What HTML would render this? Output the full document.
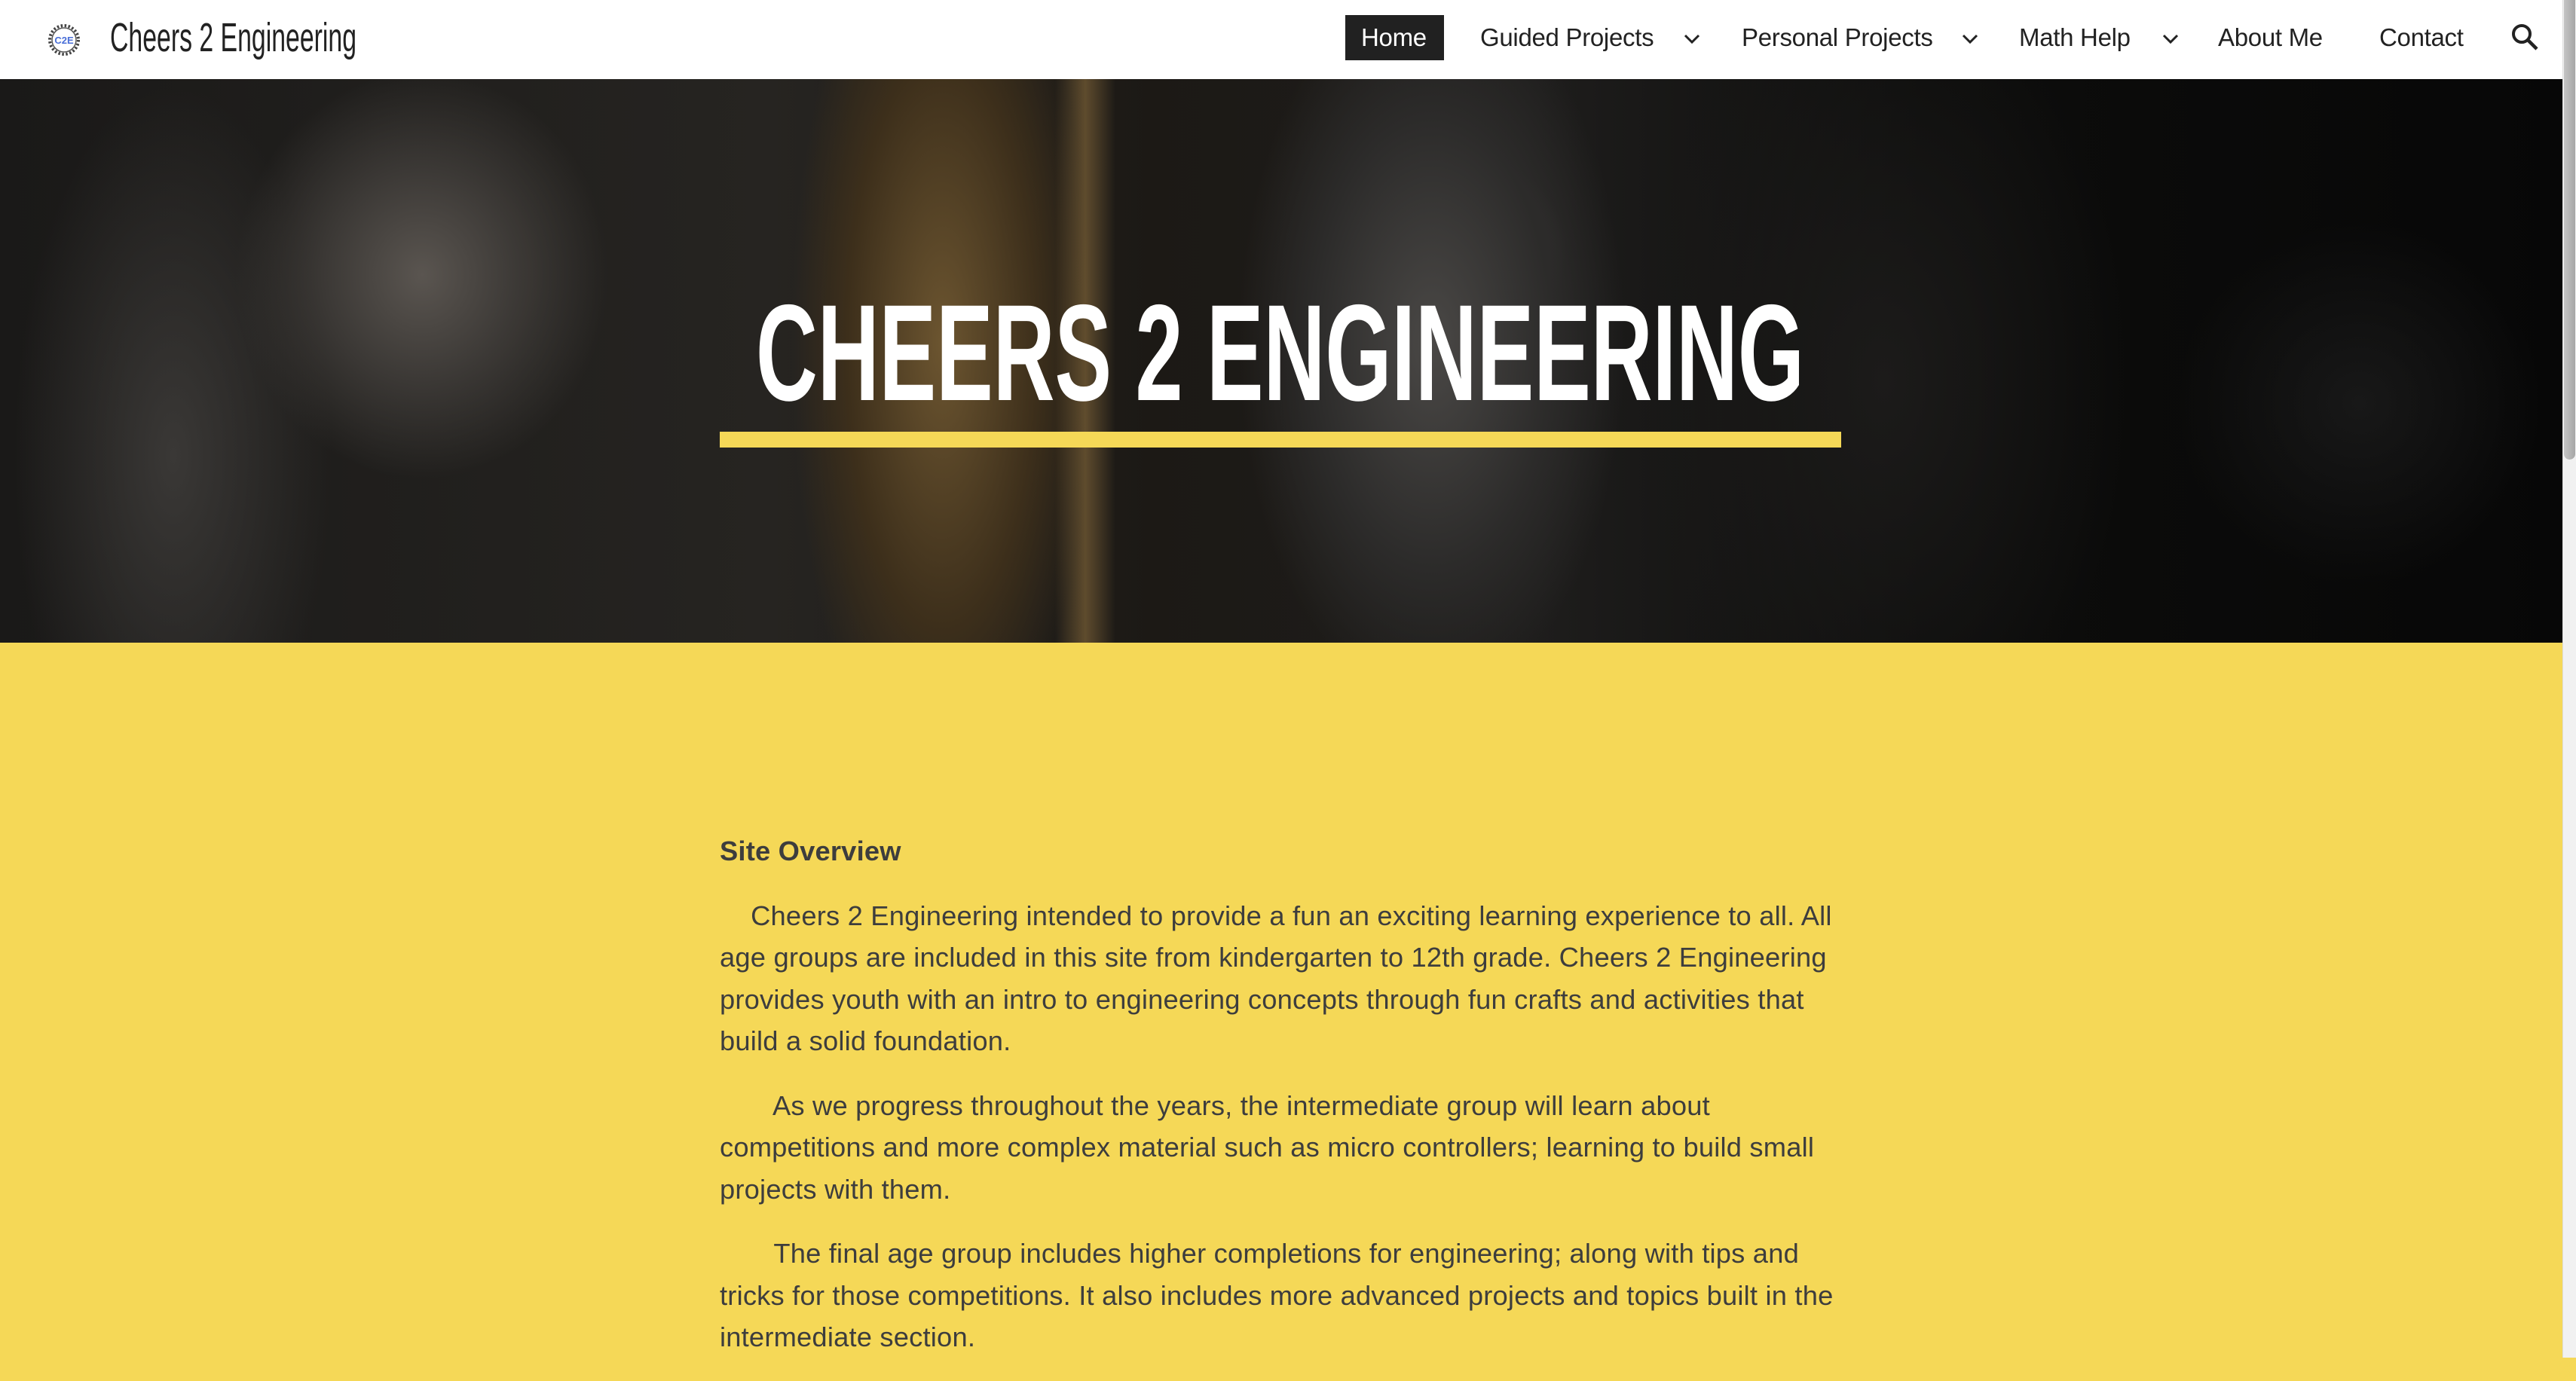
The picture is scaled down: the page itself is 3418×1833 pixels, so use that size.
<!DOCTYPE html>
<html><head><meta charset="utf-8"><style>
*{margin:0;padding:0;box-sizing:border-box}
body{width:3418px;height:1802px;overflow:hidden;background:#f5d857;font-family:"Liberation Sans",sans-serif;position:relative}
#nav{position:absolute;left:0;top:0;width:3400px;height:105px;background:#fff}
.ni{position:absolute;top:31px;font-size:33px;color:#222;white-space:nowrap;letter-spacing:-0.3px}
.chev{position:absolute;top:40px}
#hero{position:absolute;left:0;top:105px;width:3400px;height:748px;overflow:hidden;background:#0b0a09}
#content{position:absolute;left:955px;top:1102px;color:#3d3d3d;font-size:36.3px;line-height:55.5px;white-space:nowrap;letter-spacing:0.2px}
#content p{margin-bottom:30px}
#sb{position:absolute;left:3400px;top:0;width:18px;height:1802px;background:#f1f1f1;border-left:1px solid #ddd}
#thumb{position:absolute;left:3402px;top:0;width:15px;height:610px;background:linear-gradient(90deg,#c4c4c4,#a6a6a6);border-radius:0 0 8px 8px}
</style></head><body>
<div id="nav">
 <svg style="position:absolute;left:62px;top:30px" width="46" height="46" viewBox="0 0 46 46">
  <circle cx="23" cy="23" r="19" fill="none" stroke="#444" stroke-width="4" stroke-dasharray="2.5 2.5"/>
  <circle cx="23" cy="23" r="16" fill="#fff" stroke="#555" stroke-width="1.5"/>
  <text x="23" y="28" font-size="13" font-weight="bold" text-anchor="middle" fill="#4a6fd8" font-family="Liberation Sans Narrow, Liberation Sans">C2E</text>
 </svg>
 <svg style="position:absolute;left:146px;top:22px" width="340" height="62"><text x="0" y="46" font-size="54" fill="#222" textLength="327" lengthAdjust="spacingAndGlyphs" font-family="Liberation Sans">Cheers 2 Engineering</text></svg>
 <div style="position:absolute;left:1785px;top:20px;width:131px;height:60px;background:#212121"></div>
 <div class="ni" style="left:1806px;color:#fff">Home</div>
 <div class="ni" style="left:1964px">Guided Projects</div>
 <div class="ni" style="left:2311px">Personal Projects</div>
 <div class="ni" style="left:2679px">Math Help</div>
 <div class="ni" style="left:2943px">About Me</div>
 <div class="ni" style="left:3157px">Contact</div>
 <svg class="chev" style="left:2233px" width="24" height="24"><path d="M3 7l9 9 9-9" fill="none" stroke="#222" stroke-width="3"/></svg>
 <svg class="chev" style="left:2602px" width="24" height="24"><path d="M3 7l9 9 9-9" fill="none" stroke="#222" stroke-width="3"/></svg>
 <svg class="chev" style="left:2868px" width="24" height="24"><path d="M3 7l9 9 9-9" fill="none" stroke="#222" stroke-width="3"/></svg>
 <svg style="position:absolute;left:3331px;top:30px" width="40" height="40"><circle cx="15" cy="15" r="11" fill="none" stroke="#222" stroke-width="4"/><path d="M23 23l12 12" stroke="#222" stroke-width="4.5"/></svg>
</div>
<div id="hero">
 <div style="position:absolute;inset:0;background:
 radial-gradient(ellipse 330px 360px at 560px 260px,#5a5550 0%,#3b3835 40%,transparent 75%),
 radial-gradient(ellipse 150px 150px at 570px 260px,#8a6a48 0%,#3a2a1e 70%,transparent 100%),
 radial-gradient(ellipse 300px 700px at 230px 500px,#3a3836 0%,transparent 70%),
 radial-gradient(ellipse 250px 750px at 1250px 350px,#6c5530 0%,#3d2f1b 50%,transparent 80%),
 radial-gradient(ellipse 320px 600px at 1900px 350px,#4a4846 0%,#2c2b2a 50%,transparent 80%),
 radial-gradient(ellipse 160px 160px at 1950px 230px,#6a6866 0%,transparent 80%),
 radial-gradient(ellipse 400px 700px at 2500px 400px,#1c1b1a 0%,transparent 80%),
 radial-gradient(ellipse 300px 300px at 3130px 430px,#181818 0%,transparent 80%),
 linear-gradient(90deg,#1a1918 0%,#262421 30%,#1c1915 45%,#1e1d1c 60%,#0d0d0c 75%,#070707 100%)"></div>
 <div style="position:absolute;left:1400px;top:0;width:80px;height:748px;background:linear-gradient(90deg,transparent,#8a6c3c,transparent);opacity:.6"></div>
 <svg style="position:absolute;left:0;top:0" width="3400" height="748">
  <text x="1003" y="426" font-size="182" font-weight="bold" fill="#fff" textLength="1391" lengthAdjust="spacingAndGlyphs" font-family="Liberation Sans">CHEERS 2 ENGINEERING</text>
  <rect x="955" y="468" width="1488" height="21" fill="#f5d857"/>
 </svg>
</div>
<div id="content">
 <p style="font-weight:bold">Site Overview</p>
 <p>&nbsp;&nbsp;&nbsp; Cheers 2 Engineering intended to provide a fun an exciting learning experience to all. All<br>age groups are included in this site from kindergarten to 12th grade. Cheers 2 Engineering<br>provides youth with an intro to engineering concepts through fun crafts and activities that<br>build a solid foundation.</p>
 <p>&nbsp;&nbsp;&nbsp;&nbsp;&nbsp;&nbsp; As we progress throughout the years, the intermediate group will learn about<br>competitions and more complex material such as micro controllers; learning to build small<br>projects with them.</p>
 <p>&nbsp;&nbsp;&nbsp;&nbsp;&nbsp;&nbsp; The final age group includes higher completions for engineering; along with tips and<br>tricks for those competitions. It also includes more advanced projects and topics built in the<br>intermediate section.</p>
</div>
<div id="sb"></div><div id="thumb"></div>
</body></html>
